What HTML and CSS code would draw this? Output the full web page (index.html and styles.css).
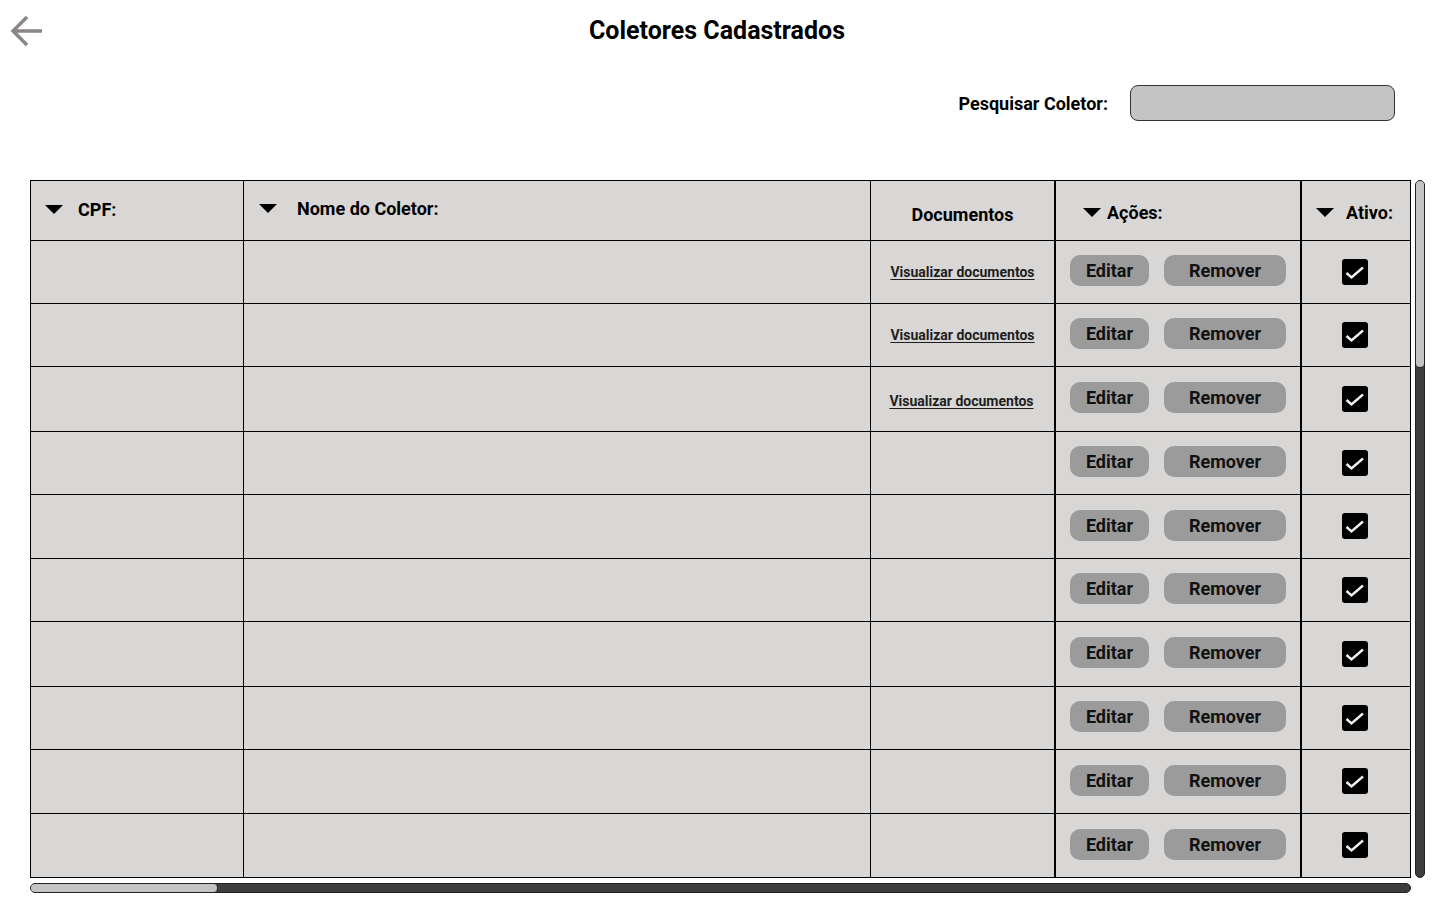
FILE: index.html
```html
<!DOCTYPE html>
<html lang="pt-BR">
<head>
<meta charset="utf-8">
<title>Coletores Cadastrados</title>
<link rel="stylesheet" href="styles.css">
</head>
<body>
<header class="topbar">
  <div class="back">
    <svg width="34" height="32" viewBox="0 0 34 32" aria-hidden="true">
      <path d="M32 16 H3 M17 2 L3 16 L17 30" fill="none" stroke="#8a8587" stroke-width="3.4" stroke-linecap="butt" stroke-linejoin="miter"/>
    </svg>
  </div>
  <h1 class="title">Coletores Cadastrados</h1>
  <div></div>
</header>

<div class="search">
  <label class="search-label" for="q">Pesquisar Coletor:</label>
  <input class="search-input" id="q" type="text">
</div>

<div class="table-area">
  <div class="table-row-wrap">
    <div class="grid">
      <div class="cell head c1"><span class="tri"></span><span class="htext">CPF:</span></div>
      <div class="cell head c2"><span class="tri"></span><span class="htext">Nome do Coletor:</span></div>
      <div class="cell head c3 center"><span class="htext doc">Documentos</span></div>
      <div class="cell head c4 thick"><span class="tri"></span><span class="htext">Ações:</span></div>
      <div class="cell head c5 thick-l"><span class="tri"></span><span class="htext">Ativo:</span></div>

      <div class="cell"></div><div class="cell"></div>
      <div class="cell center"><a class="link" href="#">Visualizar documentos</a></div>
      <div class="cell actions thick"><button class="btn edit">Editar</button><button class="btn remove">Remover</button></div>
      <div class="cell center"><span class="check"><svg width="26" height="26" viewBox="0 0 26 26"><path d="M4.5 14 L9.5 18.5 L21 8.5" fill="none" stroke="#f2f2f2" stroke-width="2.4"/></svg></span></div>

      <div class="cell"></div><div class="cell"></div>
      <div class="cell center"><a class="link" href="#">Visualizar documentos</a></div>
      <div class="cell actions thick"><button class="btn edit">Editar</button><button class="btn remove">Remover</button></div>
      <div class="cell center"><span class="check"><svg width="26" height="26" viewBox="0 0 26 26"><path d="M4.5 14 L9.5 18.5 L21 8.5" fill="none" stroke="#f2f2f2" stroke-width="2.4"/></svg></span></div>

      <div class="cell"></div><div class="cell"></div>
      <div class="cell center"><a class="link low" href="#">Visualizar documentos</a></div>
      <div class="cell actions thick"><button class="btn edit">Editar</button><button class="btn remove">Remover</button></div>
      <div class="cell center"><span class="check"><svg width="26" height="26" viewBox="0 0 26 26"><path d="M4.5 14 L9.5 18.5 L21 8.5" fill="none" stroke="#f2f2f2" stroke-width="2.4"/></svg></span></div>

      <div class="cell"></div><div class="cell"></div><div class="cell"></div>
      <div class="cell actions thick"><button class="btn edit">Editar</button><button class="btn remove">Remover</button></div>
      <div class="cell center"><span class="check"><svg width="26" height="26" viewBox="0 0 26 26"><path d="M4.5 14 L9.5 18.5 L21 8.5" fill="none" stroke="#f2f2f2" stroke-width="2.4"/></svg></span></div>

      <div class="cell"></div><div class="cell"></div><div class="cell"></div>
      <div class="cell actions thick"><button class="btn edit">Editar</button><button class="btn remove">Remover</button></div>
      <div class="cell center"><span class="check"><svg width="26" height="26" viewBox="0 0 26 26"><path d="M4.5 14 L9.5 18.5 L21 8.5" fill="none" stroke="#f2f2f2" stroke-width="2.4"/></svg></span></div>

      <div class="cell"></div><div class="cell"></div><div class="cell"></div>
      <div class="cell actions thick"><button class="btn edit">Editar</button><button class="btn remove">Remover</button></div>
      <div class="cell center"><span class="check"><svg width="26" height="26" viewBox="0 0 26 26"><path d="M4.5 14 L9.5 18.5 L21 8.5" fill="none" stroke="#f2f2f2" stroke-width="2.4"/></svg></span></div>

      <div class="cell"></div><div class="cell"></div><div class="cell"></div>
      <div class="cell actions thick"><button class="btn edit">Editar</button><button class="btn remove">Remover</button></div>
      <div class="cell center"><span class="check"><svg width="26" height="26" viewBox="0 0 26 26"><path d="M4.5 14 L9.5 18.5 L21 8.5" fill="none" stroke="#f2f2f2" stroke-width="2.4"/></svg></span></div>

      <div class="cell"></div><div class="cell"></div><div class="cell"></div>
      <div class="cell actions thick"><button class="btn edit">Editar</button><button class="btn remove">Remover</button></div>
      <div class="cell center"><span class="check"><svg width="26" height="26" viewBox="0 0 26 26"><path d="M4.5 14 L9.5 18.5 L21 8.5" fill="none" stroke="#f2f2f2" stroke-width="2.4"/></svg></span></div>

      <div class="cell"></div><div class="cell"></div><div class="cell"></div>
      <div class="cell actions thick"><button class="btn edit">Editar</button><button class="btn remove">Remover</button></div>
      <div class="cell center"><span class="check"><svg width="26" height="26" viewBox="0 0 26 26"><path d="M4.5 14 L9.5 18.5 L21 8.5" fill="none" stroke="#f2f2f2" stroke-width="2.4"/></svg></span></div>

      <div class="cell"></div><div class="cell"></div><div class="cell"></div>
      <div class="cell actions thick"><button class="btn edit">Editar</button><button class="btn remove">Remover</button></div>
      <div class="cell center"><span class="check"><svg width="26" height="26" viewBox="0 0 26 26"><path d="M4.5 14 L9.5 18.5 L21 8.5" fill="none" stroke="#f2f2f2" stroke-width="2.4"/></svg></span></div>
    </div>
    <div class="vscroll"><div class="vthumb"></div></div>
  </div>
  <div class="hscroll"><div class="hthumb"></div></div>
</div>
</body>
</html>
```

FILE: styles.css
```css
* { box-sizing: border-box; }

body {
  margin: 0;
  background: #ffffff;
  font-family: Roboto, "Liberation Sans", sans-serif;
  color: #000;
}

.topbar {
  height: 62px;
  display: grid;
  grid-template-columns: 1fr auto 1fr;
  align-items: center;
}

.back {
  padding-left: 10px;
  display: flex;
  align-items: center;
}

.back svg { display: block; }

.title {
  margin: 0;
  font-size: 25px;
  font-weight: 700;
  line-height: 28px;
  padding-right: 6px;
}

.search {
  margin-top: 23px;
  display: flex;
  justify-content: flex-end;
  align-items: center;
  gap: 22px;
  padding-right: 45px;
}

.search-label {
  font-size: 18px;
  font-weight: 700;
}

.search-input {
  width: 265px;
  height: 36px;
  background: #c4c4c4;
  border: 1px solid #333;
  border-radius: 8px;
  font: inherit;
  outline: none;
}

.table-area {
  margin-top: 59px;
  padding-left: 30px;
}

.table-row-wrap {
  display: flex;
  align-items: stretch;
  gap: 4px;
}

.grid {
  display: grid;
  grid-template-columns: 213px 627px 185px 246px 109px;
  grid-template-rows: 60px 63px 63px 65px 63px 64px 63px 65px 63px 64px 64px;
  width: 1381px;
  border-left: 1px solid #000;
  border-top: 1px solid #000;
  background: #d9d9d9;
}

.cell {
  border-right: 1px solid #000;
  border-bottom: 1px solid #000;
  background: #d8d7d6;
  display: flex;
  align-items: center;
}

.cell:nth-child(5n+3),
.cell:nth-child(5n+4) {
  border-right-width: 2px;
}

.center { justify-content: center; }

.head {
  font-size: 18px;
  font-weight: 700;
}

.tri {
  width: 0;
  height: 0;
  border-left: 9px solid transparent;
  border-right: 9px solid transparent;
  border-top: 9px solid #000;
  flex: none;
}

.c1 { padding-left: 14px; padding-bottom: 2px; }
.c1 .tri { margin-right: 15px; }
.c2 { padding-left: 15px; padding-bottom: 4px; }
.c2 .tri { margin-right: 20px; }
.c3 { padding-top: 8px; }
.c4 { padding-left: 27px; padding-top: 4px; }
.c4 .tri { margin-right: 6px; }
.c5 { padding-left: 14px; padding-top: 4px; }
.c5 .tri { margin-right: 12px; }

.link {
  font-size: 14px;
  font-weight: 700;
  color: #1e1e1e;
  text-decoration: underline;
  text-underline-offset: 2px;
  margin-top: 0;
}

.link.low { margin-top: 4px; margin-right: 2px; }

.actions {
  padding-left: 14px;
  gap: 15px;
  padding-bottom: 3px;
}

.btn {
  height: 31px;
  border: none;
  border-radius: 10px;
  background: #9b9b9b;
  font-family: Roboto, "Liberation Sans", sans-serif;
  font-size: 18px;
  font-weight: 700;
  color: #111;
  padding: 0;
}

.edit { width: 79px; }
.remove { width: 122px; }

.check {
  width: 26px;
  height: 26px;
  background: #000;
  border-radius: 3px;
  display: block;
  margin-right: 2px;
  margin-bottom: 1px;
}

.check svg { display: block; }

.vscroll {
  width: 10px;
  border: 1px solid #222;
  border-radius: 5px;
  background: #3d3d3d;
  overflow: hidden;
}

.vthumb {
  height: 187px;
  background: #c4c4c4;
  border-bottom: 1px solid #222;
  border-radius: 0 0 5px 5px;
}

.hscroll {
  margin-top: 5px;
  width: 1381px;
  height: 10px;
  border: 1px solid #222;
  border-radius: 5px;
  background: #3d3d3d;
  overflow: hidden;
}

.hthumb {
  width: 187px;
  height: 100%;
  background: #c4c4c4;
  border-right: 1px solid #222;
  border-radius: 0 5px 5px 0;
}
```
